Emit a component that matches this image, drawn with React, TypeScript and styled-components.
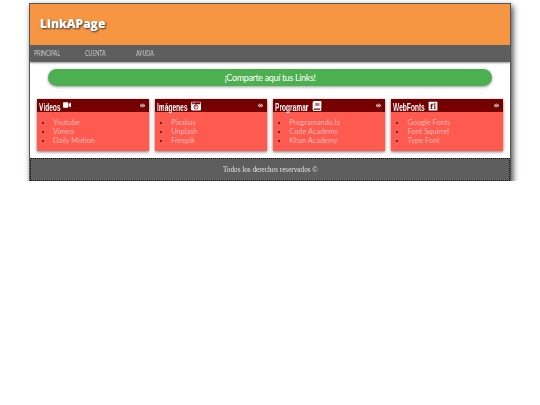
import React from "react";
import styled, { createGlobalStyle } from "styled-components";
import { FaVideo, FaCameraRetro, FaBook, FaEye, FaFonticons } from "react-icons/fa";

const Global = createGlobalStyle`
  html, body {
    margin: 0;
    background: #fff;
  }
  body {
    padding: 4px 30px 0;
  }
`;
const Wrapper = styled.div`
  width: 480px;
  background: #fff;
  box-shadow: 2px 3px 6px 1px #444;
  outline: 1px solid #555;
`;
const Header = styled.header`
  height: 41px;
  background: #f79642;
  display: flex;
  align-items: center;
  padding-left: 10px;
`;
const Logo = styled.h1`
  margin: 0 0 3px;
  font: 800 12px "Open Sans", sans-serif;
  color: #fff;
  text-shadow: 1px 1px 2px #333;
`;
const Nav = styled.nav`
  height: 17px;
  background: #5e5e5e;
  display: flex;
  align-items: center;
  padding-left: 4px;
  box-shadow: 0 1px 2px #999;
`;
const NavItem = styled.a<{ $width: number }>`
  width: ${(p) => p.$width}px;
  font: 400 7.5px "Lato", sans-serif;
  color: #ccc;
  white-space: nowrap;
  transform: scaleX(0.7);
  transform-origin: left center;
  will-change: transform;
`;
const Main = styled.main`
  padding: 7px 7px;
`;
const Banner = styled.div`
  width: 444px;
  height: 17px;
  margin: 0 auto 13px;
  border-radius: 9px;
  background: #4caf50;
  box-shadow: 0 1px 3px #999;
  display: flex;
  align-items: center;
  justify-content: center;
  font: 400 9px "Lato", sans-serif;
  letter-spacing: -0.35px;
  color: #fff;
`;
const Cards = styled.div`
  display: grid;
  grid-template-columns: repeat(4, 111.5px);
  justify-content: space-between;
`;
const Card = styled.section`
  height: 52px;
  background: #ff5a4f;
  box-shadow: 0 1px 3px #777;
`;
const CardHead = styled.div`
  height: 13px;
  background: #750000;
  display: flex;
  align-items: center;
  justify-content: space-between;
  padding: 0 4px 0 2px;
  color: #fff;
`;
const CardTitle = styled.h2`
  margin: 0;
  display: flex;
  align-items: flex-start;
  gap: 2px;
  height: 12px;
`;
const TitleText = styled.span<{ $width: number }>`
  width: ${(p) => p.$width}px;
  font: 700 11px/14px "Liberation Sans", sans-serif;
  white-space: nowrap;
  transform: scaleX(0.6);
  transform-origin: left center;
  will-change: transform;
`;
const IconBox = styled.span`
  display: flex;
  margin-top: 1px;
`;
const LinkList = styled.ul`
  margin: 6px 0 0;
  padding: 0 0 0 16px;
  list-style: disc;
  font: 400 7.4px/9px "Lato", sans-serif;
  li::marker {
    font-size: 6px;
  }
`;
const LinkItem = styled.li`
  color: #222;
  span {
    color: #ffb8b0;
  }
`;
const Footer = styled.footer`
  height: 23px;
  box-sizing: border-box;
  background: #5e5e5e;
  border: 1px dotted #111;
  display: flex;
  align-items: center;
  justify-content: center;
`;
const FooterText = styled.span`
  font: 400 7.2px "Liberation Serif", serif;
  color: #e4e4e4;
  will-change: transform;
`;

const cards = [
  { title: "Videos", width: 22, icon: <FaVideo size={8} />, links: ["Youtube", "Vimeo", "Daily Motion"] },
  { title: "Imágenes", width: 32, icon: <FaCameraRetro size={10} />, links: ["Pixabay", "Unplash", "Freepik"] },
  { title: "Programar", width: 35, icon: <FaBook size={10} />, links: ["Programando.la", "Code Academy", "Khan Academy"] },
  { title: "WebFonts", width: 33, icon: <FaFonticons size={10} />, links: ["Google Fonts", "Font Squirrel", "Type Font"] },
];

export default function App() {
  return (
    <Wrapper>
      <Global />
      <Header>
        <Logo>LinkAPage</Logo>
      </Header>
      <Nav>
        <NavItem $width={51}>PRINCIPAL</NavItem>
        <NavItem $width={51}>CUENTA</NavItem>
        <NavItem $width={40}>AYUDA</NavItem>
      </Nav>
      <Main>
        <Banner>¡Comparte aquí tus Links!</Banner>
        <Cards>
          {cards.map((card) => (
            <Card key={card.title}>
              <CardHead>
                <CardTitle>
                  <TitleText $width={card.width}>{card.title}</TitleText>
                  <IconBox>{card.icon}</IconBox>
                </CardTitle>
                <FaEye size={5} color="#ddd" />
              </CardHead>
              <LinkList>
                {card.links.map((link) => (
                  <LinkItem key={link}>
                    <span>{link}</span>
                  </LinkItem>
                ))}
              </LinkList>
            </Card>
          ))}
        </Cards>
      </Main>
      <Footer>
        <FooterText>Todos los derechos reservados ©</FooterText>
      </Footer>
    </Wrapper>
  );
}
